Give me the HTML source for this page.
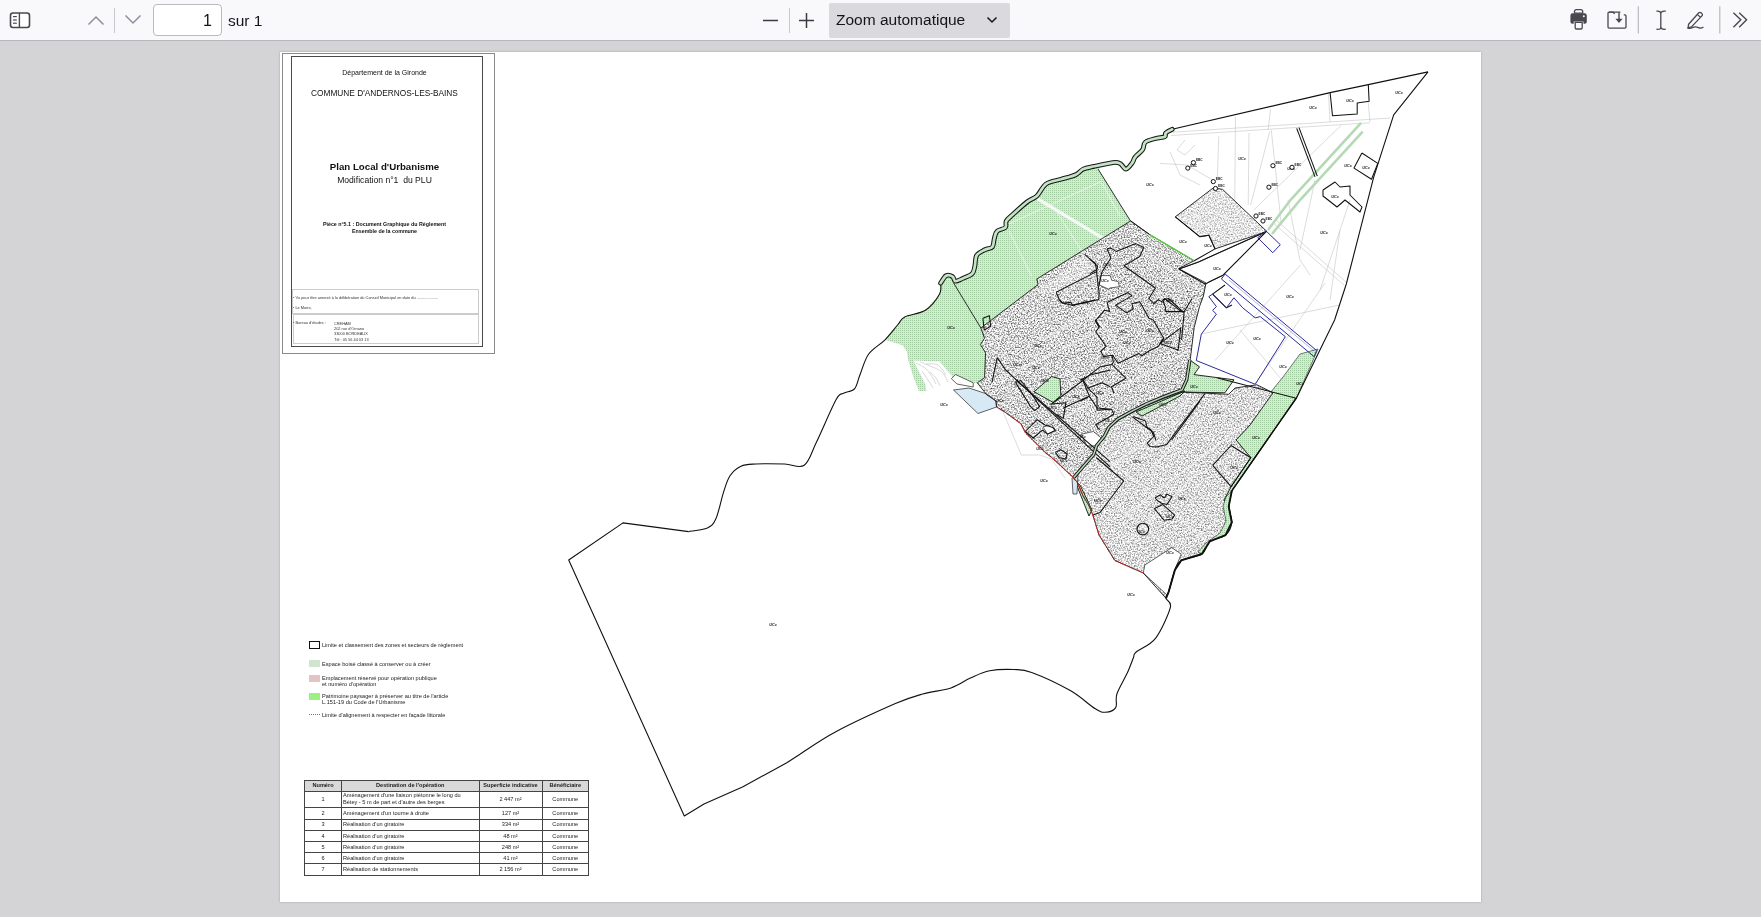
<!DOCTYPE html>
<html><head><meta charset="utf-8">
<style>
html,body{margin:0;padding:0;width:1761px;height:917px;overflow:hidden;background:#d4d4d7;font-family:"Liberation Sans",sans-serif;}
#tb{position:absolute;left:0;top:0;width:1761px;height:40px;background:#f9f9fb;border-bottom:1px solid #b8b8bc;will-change:transform;}
.ic{position:absolute;}
#pagenum{position:absolute;left:153px;top:4px;width:69px;height:32px;box-sizing:border-box;border:1px solid #b9b9c2;border-radius:4px;background:#fff;font-size:16px;color:#15141a;text-align:right;padding-right:9px;line-height:32px;}
#sur{position:absolute;left:228px;top:12px;font-size:15.5px;color:#15141a;}
#zoomsel{position:absolute;left:829px;top:3px;width:181px;height:35px;background:#d9d9de;border-radius:2px;}
#zoomtxt{position:absolute;left:836px;top:11px;font-size:15.5px;color:#15141a;}
.sep{position:absolute;top:8px;width:1px;height:25px;background:#bdbdc2;}
#page{position:absolute;left:280px;top:52px;width:1201px;height:850px;background:#fff;box-shadow:0 0 2px rgba(0,0,0,0.25);will-change:transform;}
svg{position:absolute;left:0;top:0;}
.tt{position:absolute;left:8.5px;width:192px;text-align:center;color:#111;white-space:nowrap;line-height:1;}
.lg{position:absolute;font-size:5.6px;color:#222;white-space:nowrap;line-height:6px;}
#ops td{border:1px solid #444;padding:0 1px;font-size:5.6px;line-height:7.4px;text-align:center;color:#222;box-sizing:border-box;}
.st{position:absolute;font-size:3.9px;color:#333;white-space:nowrap;line-height:1;}
</style></head><body>
<div id="tb">
 <svg class="ic" width="40" height="40" style="left:0;top:0">
  <rect x="10.5" y="13" width="19" height="14.5" rx="2.5" fill="#fff" stroke="#48484f" stroke-width="1.6"/>
  <line x1="19.4" y1="13" x2="19.4" y2="27.5" stroke="#48484f" stroke-width="1.4"/>
  <line x1="13" y1="16.6" x2="16.8" y2="16.6" stroke="#48484f" stroke-width="1.2"/>
  <line x1="13" y1="20" x2="16.8" y2="20" stroke="#48484f" stroke-width="1.2"/>
  <line x1="13" y1="23.2" x2="16.8" y2="23.2" stroke="#48484f" stroke-width="1.2"/>
 </svg>
 <svg class="ic" width="160" height="40" style="left:80px;top:0">
  <polyline points="8.5,24.5 16,17 23.5,24.5" fill="none" stroke="#8f8f9d" stroke-width="1.5"/>
  <line x1="34.5" y1="8" x2="34.5" y2="33" stroke="#c8c8cc" stroke-width="1"/>
  <polyline points="45.5,15.5 53,23 60.5,15.5" fill="none" stroke="#8f8f9d" stroke-width="1.5"/>
 </svg>
 <div id="pagenum">1</div>
 <div id="sur">sur 1</div>
 <svg class="ic" width="60" height="40" style="left:760px;top:0">
  <line x1="3" y1="20.5" x2="18" y2="20.5" stroke="#3a3a44" stroke-width="1.5"/>
  <line x1="29.5" y1="8" x2="29.5" y2="33" stroke="#c8c8cc" stroke-width="1"/>
  <line x1="39" y1="20.5" x2="54" y2="20.5" stroke="#3a3a44" stroke-width="1.5"/>
  <line x1="46.5" y1="13" x2="46.5" y2="28" stroke="#3a3a44" stroke-width="1.5"/>
 </svg>
 <div id="zoomsel"></div>
 <div id="zoomtxt">Zoom automatique</div>
 <svg class="ic" width="20" height="40" style="left:982px;top:0">
  <polyline points="5.5,17.5 10,22 14.5,17.5" fill="none" stroke="#15141a" stroke-width="1.5"/>
 </svg>
 <svg class="ic" width="221" height="40" style="left:1540px;top:0">
  <g fill="#48484f" stroke="none">
   <path d="M34.5,13.2 v-1.6 a2,2 0 0 1 2,-2 h4.2 a2,2 0 0 1 2,2 v1.6 z" fill="none" stroke="#48484f" stroke-width="1.3"/>
   <path d="M32.6,13.3 h12 a2.2,2.2 0 0 1 2.2,2.2 v6.3 a2,2 0 0 1 -2,2 h-1.3 v-2.4 h-9.8 v2.4 h-1.3 a2,2 0 0 1 -2,-2 v-6.3 a2.2,2.2 0 0 1 2.2,-2.2 z"/>
   <circle cx="43.8" cy="16.2" r="1" fill="#f9f9fb"/>
   <path d="M35.2,22.4 h7 v5.4 a1.2,1.2 0 0 1 -1.2,1.2 h-4.6 a1.2,1.2 0 0 1 -1.2,-1.2 z" fill="none" stroke="#48484f" stroke-width="1.3"/>
  </g>
  <path d="M80.4,12.2 h-11.3 a1.1,1.1 0 0 0 -1.1,1.1 v13.8 a1.1,1.1 0 0 0 1.1,1.1 h15.8 a1.1,1.1 0 0 0 1.1,-1.1 v-11.2 a1,1 0 0 0 -1,-1 h-1.2" fill="none" stroke="#48484f" stroke-width="1.3"/>
  <path d="M69.1,12.2 h4 l1.6,1.6" fill="none" stroke="#48484f" stroke-width="1.3"/>
  <line x1="79" y1="12.5" x2="79" y2="20" stroke="#48484f" stroke-width="1.4"/>
  <path d="M75.4,18.7 h7.2 l-3.6,4.2 z" fill="#48484f"/>
  <line x1="98.3" y1="6.2" x2="98.3" y2="33.6" stroke="#b4b4ba" stroke-width="1.1"/>
  <path d="M116.4,11.2 q4,-0.6 4.4,2 v14 q0.3,2.6 -4.4,2 M125.8,11.2 q-4.6,-0.6 -5,2 M125.8,29.2 q-4.6,0.6 -5,-2 M120.8,13.2 v14" fill="none" stroke="#48484f" stroke-width="1.3"/>
  <path d="M148.6,24.2 l10.2,-11.4 a1.6,1.6 0 0 1 2.3,0 l0.8,0.8 a1.6,1.6 0 0 1 0,2.3 l-10.4,11 l-3.4,1 z M157.4,14.4 l3,3" fill="none" stroke="#48484f" stroke-width="1.3" stroke-linejoin="round"/>
  <path d="M147.4,27.6 q2.2,1.5 5,0 q3,-1.4 6,0 q2.6,1.2 5,-0.6" fill="none" stroke="#48484f" stroke-width="1.3"/>
  <line x1="179.8" y1="6.2" x2="179.8" y2="33.6" stroke="#b4b4ba" stroke-width="1.1"/>
  <path d="M193.4,12.8 l7.4,7 l-7.4,7.4 M199.2,12.8 l7.4,7 l-7.4,7.4" fill="none" stroke="#48484f" stroke-width="1.4"/>
 </svg>
</div>
<div id="page">
 <div style="position:absolute;left:2px;top:1px;width:213px;height:300.5px;box-sizing:border-box;border:1px solid #8a8a8a;"></div>
 <div style="position:absolute;left:11px;top:4px;width:192px;height:291px;box-sizing:border-box;border:1px solid #4a4a4a;"></div>
 <div class="tt" style="top:17px;font-size:7px;">Département de la Gironde</div>
 <div class="tt" style="top:36.5px;font-size:8.3px;">COMMUNE D'ANDERNOS-LES-BAINS</div>
 <div class="tt" style="top:109.5px;font-size:9.7px;font-weight:bold;">Plan Local d'Urbanisme</div>
 <div class="tt" style="top:123.5px;font-size:8.6px;">Modification n°1&nbsp; du PLU</div>
 <div class="tt" style="top:170px;font-size:5.3px;font-weight:bold;">Pièce n°5.1 : Document Graphique du Règlement</div>
 <div class="tt" style="top:176.8px;font-size:5.3px;font-weight:bold;">Ensemble de la commune</div>
 <div style="position:absolute;left:12px;top:237px;width:187px;height:25px;box-sizing:border-box;border:1px solid #ccc;"></div>
 <div style="position:absolute;left:13px;top:262px;width:186px;height:30px;box-sizing:border-box;border:1px solid #ccc;"></div>
 <div class="st" style="left:13px;top:244px;">• Vu pour être annexé à la délibération du Conseil Municipal en date du ....................</div>
 <div class="st" style="left:13px;top:254px;">• Le Maire,</div>
 <div class="st" style="left:13px;top:269px;">• Bureau d'études :</div>
 <div class="st" style="left:54px;top:269px;line-height:5.2px;">CREHAM<br>202 rue d'Ornano<br>33000 BORDEAUX<br>Tél : 05 56 44 03 13</div>

 <div style="position:absolute;left:29px;top:589px;width:11px;height:8px;box-sizing:border-box;border:1.3px solid #111;"></div>
 <div class="lg" style="left:42px;top:590px;">Limite et classement des zones et secteurs de règlement</div>
 <div style="position:absolute;left:29px;top:608px;width:11px;height:7px;background:#cfe5cf;"></div>
 <div class="lg" style="left:42px;top:609px;">Espace boisé classé à conserver ou à créer</div>
 <div style="position:absolute;left:29px;top:623px;width:11px;height:7px;background:#e2c4c4;"></div>
 <div class="lg" style="left:42px;top:623px;">Emplacement réservé pour opération publique<br>et numéro d'opération</div>
 <div style="position:absolute;left:29px;top:641px;width:11px;height:7px;background:#9cf27e;"></div>
 <div class="lg" style="left:42px;top:641px;">Patrimoine paysager à préserver au titre de l'article<br>L.151-19 du Code de l'Urbanisme</div>
 <div style="position:absolute;left:29px;top:662px;width:11px;height:0;border-top:1px dotted #e04848;"></div>
 <div class="lg" style="left:42px;top:660px;">Limite d'alignement à respecter en façade littorale</div>
<table id="ops" style="position:absolute;left:24px;top:728px;border-collapse:collapse;"><tr style="height:10.6px;background:#d9d9d9;font-weight:bold;"><td style="width:37px">Numéro</td><td style="width:137.5px">Destination de l&#39;opération</td><td style="width:63px">Superficie indicative</td><td style="width:46.5px">Bénéficiaire</td></tr><tr style="height:16.5px"><td>1</td><td style="text-align:left">Aménagement d'une liaison piétonne le long du<br>Bétey - 5 m de part et d'autre des berges</td><td>2 447 m²</td><td>Commune</td></tr><tr style="height:11.6px"><td>2</td><td style="text-align:left">Aménagement d'un tourne à droite</td><td>127 m²</td><td>Commune</td></tr><tr style="height:11.4px"><td>3</td><td style="text-align:left">Réalisation d'un giratoire</td><td>334 m²</td><td>Commune</td></tr><tr style="height:11.3px"><td>4</td><td style="text-align:left">Réalisation d'un giratoire</td><td>48 m²</td><td>Commune</td></tr><tr style="height:11px"><td>5</td><td style="text-align:left">Réalisation d'un giratoire</td><td>248 m²</td><td>Commune</td></tr><tr style="height:11px"><td>6</td><td style="text-align:left">Réalisation d'un giratoire</td><td>41 m²</td><td>Commune</td></tr><tr style="height:11.9px"><td>7</td><td style="text-align:left">Réalisation de stationnements</td><td>2 156 m²</td><td>Commune</td></tr></table>
</div>
<!--MAP--><svg width="1761" height="917" viewBox="0 0 1761 917" style="position:absolute;left:0;top:0">
<defs>
<filter id="speck" x="0" y="0" width="100%" height="100%" color-interpolation-filters="sRGB">
 <feTurbulence type="fractalNoise" baseFrequency="0.7" numOctaves="2" seed="7" result="n"/>
 <feColorMatrix in="n" type="matrix" values="1.6 0 0 0 0.03  1.6 0 0 0 0.03  1.6 0 0 0 0.03  0 0 0 0 1" />
 <feGaussianBlur stdDeviation="0.3"/>
</filter>
<pattern id="gdots" width="2" height="2" patternUnits="userSpaceOnUse"><rect width="2" height="2" fill="#d4ead4"/><rect width="1" height="1" fill="#a3cca3"/></pattern>
<clipPath id="urb"><polygon points="980.9,328.0 1038.1,284.5 1036.8,279.0 1130.5,221.0 1149.7,234.6 1194.2,260.8 1178.5,268.6 1206.0,283.0 1203.4,296.0 1199.5,306.6 1194.2,327.5 1190.3,358.9 1186.7,379.8 1182.1,389.8 1163.8,396.6 1145.5,404.3 1133.3,410.4 1118.0,418.8 1108.9,427.2 1104.3,436.3 1096.6,445.5 1093.6,454.7 1082.9,466.9 1073.7,477.6 1068.5,473.0 1051.6,457.4 1045.5,452.8 1031.8,439.1 1025.6,433.0 1021.0,423.8 1004.3,411.6 996.6,407.0 995.9,400.9 986.7,394.8 977.3,382.8 984.5,377.7 985.6,352.8 980.4,344.5 984.5,338.3"/><polygon points="1073.7,479.0 1082.9,468.0 1093.6,456.0 1096.6,447.0 1104.3,438.0 1108.9,429.0 1118.0,420.5 1133.3,412.0 1145.5,406.0 1163.8,398.5 1182.1,392.0 1228.7,394.3 1235.0,388.0 1257.0,384.8 1273.0,392.8 1250.0,425.0 1236.0,440.0 1250.8,457.7 1231.0,486.7 1224.0,500.0 1229.0,506.0 1231.8,522.4 1225.5,535.1 1209.7,541.4 1201.8,554.0 1181.2,560.4 1174.9,569.9 1168.6,592.0 1166.0,598.3 1143.3,573.0 1114.8,560.4 1099.0,535.0 1093.3,516.5 1089.2,506.1 1083.0,495.8 1076.8,481.3"/><polygon points="1175.3,216.8 1213.4,187.8 1222.6,189.4 1266.9,231.5 1215.0,248.9 1208.9,235.2 1199.7,236.7"/></clipPath>
</defs>
<polygon points="1428.0,71.9 1393.7,114.9 1373.7,177.1 1346.3,284.0 1334.6,320.0 1296.7,397.5 1231.8,490.8 1228.7,506.6 1231.8,522.4 1225.5,535.1 1209.7,541.4 1201.8,554.0 1181.2,560.4 1174.9,569.9 1168.6,592.0 1166.0,598.3 1170.3,607.7 1155.5,638.4 1136.2,652.0 1133.4,657.7 1127.0,673.6 1116.9,694.0 1115.7,707.6 1105.5,712.2 1095.3,708.8 1070.3,690.6 1031.7,672.4 1013.5,669.5 989.7,670.8 970.4,678.1 951.0,687.9 922.7,694.0 895.4,703.6 836.3,731.5 800.0,754.2 786.8,762.7 743.0,786.7 704.0,804.0 684.3,816.0 568.7,560.0 623.0,522.9 688.6,531.6 707.4,528.0 716.0,518.5 723.5,492.3 730.0,475.8 741.0,466.2 756.0,464.0 784.6,464.0 804.2,465.3 816.4,442.3 836.0,399.8 843.6,393.2 854.5,388.9 860.0,374.7 868.7,354.0 885.0,339.8 898.0,324.5 904.7,316.9 925.4,310.3 939.6,294.0 940.6,283.1 946.1,275.7 952.6,276.6 955.4,281.2 962.8,278.4 972.1,273.8 974.8,266.4 976.7,255.3 985.0,249.7 992.4,246.9 994.3,238.6 997.1,231.2 1005.4,227.5 1006.3,221.0 1012.8,214.5 1027.7,201.5 1036.9,196.0 1046.2,183.9 1061.0,179.3 1075.8,174.7 1083.3,169.1 1094.4,166.3 1112.9,162.6 1120.3,163.6 1125.9,169.1 1132.4,162.6 1135.1,157.1 1142.6,149.7 1145.3,142.2 1155.5,138.5 1164.8,136.7 1165.7,133.0 1172.2,129.3 1330.1,92.6 1368.3,84.6 1428.0,71.9" fill="#fff" stroke="none"/>
<polyline points="1171.0,132.3 1390.6,118.0" fill="none" stroke="#c4c4c4" stroke-width="0.6"/>
<polyline points="1171.0,135.5 1370.0,122.8" fill="none" stroke="#c4c4c4" stroke-width="0.6"/>
<polyline points="1235.5,117.2 1234.7,205.0" fill="none" stroke="#c4c4c4" stroke-width="0.6"/>
<polyline points="1249.0,133.0 1248.2,205.0" fill="none" stroke="#c4c4c4" stroke-width="0.6"/>
<polyline points="1270.5,109.3 1268.1,130.0" fill="none" stroke="#c4c4c4" stroke-width="0.6"/>
<polyline points="1269.7,131.5 1250.6,205.0" fill="none" stroke="#c4c4c4" stroke-width="0.6"/>
<polyline points="1271.3,130.0 1281.0,222.0" fill="none" stroke="#c4c4c4" stroke-width="0.6"/>
<polyline points="1218.8,136.3 1217.2,180.8" fill="none" stroke="#c4c4c4" stroke-width="0.6"/>
<polyline points="1328.5,94.2 1330.1,122.0" fill="none" stroke="#c4c4c4" stroke-width="0.6"/>
<polyline points="1368.0,101.0 1370.0,122.0" fill="none" stroke="#c4c4c4" stroke-width="0.6"/>
<polyline points="1341.3,125.2 1253.8,210.0" fill="none" stroke="#c4c4c4" stroke-width="0.6"/>
<polyline points="1160.0,163.4 1187.0,165.0 1214.0,180.8" fill="none" stroke="#c4c4c4" stroke-width="0.6"/>
<polyline points="1272.8,222.6 1344.2,285.3" fill="none" stroke="#c4c4c4" stroke-width="0.6"/>
<polyline points="1275.0,219.0 1346.0,282.0" fill="none" stroke="#c4c4c4" stroke-width="0.6"/>
<polyline points="1300.3,265.2 1215.0,360.5" fill="none" stroke="#c4c4c4" stroke-width="0.6"/>
<polyline points="1325.0,283.0 1255.0,384.0" fill="none" stroke="#c4c4c4" stroke-width="0.6"/>
<polyline points="1201.0,334.0 1340.0,305.0" fill="none" stroke="#c4c4c4" stroke-width="0.6"/>
<polyline points="1240.0,330.0 1297.0,398.0" fill="none" stroke="#c4c4c4" stroke-width="0.6"/>
<polyline points="1315.0,180.0 1300.0,250.0" fill="none" stroke="#c4c4c4" stroke-width="0.6"/>
<polyline points="1170.0,152.0 1180.0,175.0 1200.0,185.0" fill="none" stroke="#c4c4c4" stroke-width="0.6"/>
<polyline points="1288.0,200.0 1300.0,260.0 1310.0,275.0" fill="none" stroke="#c4c4c4" stroke-width="0.6"/>
<polyline points="1185.0,140.0 1177.0,150.0 1185.0,155.0 1195.0,145.0" fill="none" stroke="#c4c4c4" stroke-width="0.6"/>
<polyline points="1003.0,412.0 1021.4,455.0 1039.7,455.0 1051.5,459.0 1065.0,478.0" fill="none" stroke="#c4c4c4" stroke-width="0.6"/>
<polyline points="1350.0,200.0 1320.0,290.0" fill="none" stroke="#c4c4c4" stroke-width="0.6"/>
<polyline points="1340.0,230.0 1330.0,300.0" fill="none" stroke="#c4c4c4" stroke-width="0.6"/>
<polygon points="885.0,339.8 898.0,324.5 904.7,316.9 925.4,310.3 939.6,294.0 940.6,283.1 946.1,275.7 952.6,276.6 955.4,281.2 962.8,278.4 972.1,273.8 974.8,266.4 976.7,255.3 985.0,249.7 992.4,246.9 994.3,238.6 997.1,231.2 1005.4,227.5 1006.3,221.0 1012.8,214.5 1027.7,201.5 1036.9,196.0 1046.2,183.9 1061.0,179.3 1075.8,174.7 1083.3,169.1 1094.4,166.3 1112.9,162.6 1098.1,169.1 1130.5,221.0 1036.8,279.0 1038.1,284.5 980.9,328.0 984.5,338.3 980.4,344.5 985.6,352.8 984.5,377.7 977.3,382.8 974.5,383.4 952.7,376.9 939.6,361.6 913.4,360.5 925.4,384.5 926.5,391.0 918.9,391.0 913.4,376.9 908.0,359.4 906.9,351.8 902.5,345.2" fill="url(#gdots)"/>
<polygon points="1283.0,377.0 1300.0,354.0 1318.0,349.0 1296.7,397.5 1231.8,490.8 1228.7,506.6 1224.0,500.0 1231.0,486.7 1250.8,457.7 1236.0,440.0 1250.0,425.0 1270.0,393.0" fill="url(#gdots)" stroke="#222" stroke-width="0.6"/>
<polyline points="1361.1,122.8 1290.4,200 1268,230" fill="none" stroke="#b5d9b5" stroke-width="2.6"/>
<polyline points="1362.7,131.6 1300,200 1272,234" fill="none" stroke="#b5d9b5" stroke-width="2.6"/>
<polygon points="980.9,328.0 1038.1,284.5 1036.8,279.0 1130.5,221.0 1149.7,234.6 1194.2,260.8 1178.5,268.6 1206.0,283.0 1203.4,296.0 1199.5,306.6 1194.2,327.5 1190.3,358.9 1186.7,379.8 1182.1,389.8 1163.8,396.6 1145.5,404.3 1133.3,410.4 1118.0,418.8 1108.9,427.2 1104.3,436.3 1096.6,445.5 1093.6,454.7 1082.9,466.9 1073.7,477.6 1068.5,473.0 1051.6,457.4 1045.5,452.8 1031.8,439.1 1025.6,433.0 1021.0,423.8 1004.3,411.6 996.6,407.0 995.9,400.9 986.7,394.8 977.3,382.8 984.5,377.7 985.6,352.8 980.4,344.5 984.5,338.3" fill="#e4e4e4"/>
<polygon points="1073.7,479.0 1082.9,468.0 1093.6,456.0 1096.6,447.0 1104.3,438.0 1108.9,429.0 1118.0,420.5 1133.3,412.0 1145.5,406.0 1163.8,398.5 1182.1,392.0 1228.7,394.3 1235.0,388.0 1257.0,384.8 1273.0,392.8 1250.0,425.0 1236.0,440.0 1250.8,457.7 1231.0,486.7 1224.0,500.0 1229.0,506.0 1231.8,522.4 1225.5,535.1 1209.7,541.4 1201.8,554.0 1181.2,560.4 1174.9,569.9 1168.6,592.0 1166.0,598.3 1143.3,573.0 1114.8,560.4 1099.0,535.0 1093.3,516.5 1089.2,506.1 1083.0,495.8 1076.8,481.3" fill="#e4e4e4"/>
<polygon points="1175.3,216.8 1213.4,187.8 1222.6,189.4 1266.9,231.5 1215.0,248.9 1208.9,235.2 1199.7,236.7" fill="#e4e4e4"/>
<g clip-path="url(#urb)"><rect x="960" y="180" width="320" height="430" filter="url(#speck)"/>
<polyline points="1100.0,452.0 1230.0,560.0" fill="none" stroke="#f4f4f4" stroke-width="2" opacity="0.55"/>
<polyline points="1090.0,480.0 1180.0,420.0" fill="none" stroke="#f4f4f4" stroke-width="2" opacity="0.55"/>
<polyline points="1120.0,520.0 1250.0,420.0" fill="none" stroke="#f4f4f4" stroke-width="2" opacity="0.55"/>
<polyline points="1040.0,340.0 1120.0,300.0" fill="none" stroke="#f4f4f4" stroke-width="2" opacity="0.55"/>
<polyline points="1000.0,380.0 1100.0,330.0" fill="none" stroke="#f4f4f4" stroke-width="2" opacity="0.55"/>
<polyline points="1060.0,420.0 1190.0,350.0" fill="none" stroke="#f4f4f4" stroke-width="2" opacity="0.55"/>
<polyline points="1140.0,250.0 1200.0,290.0" fill="none" stroke="#f4f4f4" stroke-width="2" opacity="0.55"/>
<polyline points="1080.0,300.0 1150.0,380.0" fill="none" stroke="#f4f4f4" stroke-width="2" opacity="0.55"/>
<polyline points="1150.0,470.0 1200.0,420.0" fill="none" stroke="#f4f4f4" stroke-width="2" opacity="0.55"/>
<polyline points="1130.0,540.0 1200.0,470.0" fill="none" stroke="#f4f4f4" stroke-width="2" opacity="0.55"/>
<polyline points="1110.0,500.0 1160.0,540.0" fill="none" stroke="#f4f4f4" stroke-width="2" opacity="0.55"/>
</g>
<polygon points="1175.3,216.8 1213.4,187.8 1222.6,189.4 1266.9,231.5 1215.0,248.9 1208.9,235.2 1199.7,236.7" fill="#fff" opacity="0.4"/>
<polygon points="1073.7,479.0 1082.9,468.0 1093.6,456.0 1096.6,447.0 1104.3,438.0 1108.9,429.0 1118.0,420.5 1133.3,412.0 1145.5,406.0 1163.8,398.5 1182.1,392.0 1228.7,394.3 1235.0,388.0 1257.0,384.8 1273.0,392.8 1250.0,425.0 1236.0,440.0 1250.8,457.7 1231.0,486.7 1224.0,500.0 1229.0,506.0 1231.8,522.4 1225.5,535.1 1209.7,541.4 1201.8,554.0 1181.2,560.4 1174.9,569.9 1168.6,592.0 1166.0,598.3 1143.3,573.0 1114.8,560.4 1099.0,535.0 1093.3,516.5 1089.2,506.1 1083.0,495.8 1076.8,481.3" fill="#fff" opacity="0.2"/>
<polygon points="1036.5,290.2 1084.5,254.2 1097.6,266.2 1096.5,271.6 1056.2,292.3 1040,294" fill="#fff" opacity="0.3"/>
<circle cx="1142.8" cy="529.1" r="5.8" fill="none" stroke="#111" stroke-width="1.1"/>
<polygon points="1182.1,390.5 1186.7,379.8 1189.8,360.0 1199.5,366.8 1194.0,374.6 1234.0,379.8 1224.9,392.8 1185.2,392.1" fill="url(#gdots)" stroke="#111" stroke-width="0.9"/>
<polygon points="1136.0,412.0 1185.0,391.0 1180.0,396.0 1142.0,416.0" fill="url(#gdots)" stroke="#111" stroke-width="0.9"/>
<polygon points="1034.0,391.8 1051.6,376.5 1060.0,378.8 1060.8,395.6 1053.1,402.4" fill="url(#gdots)" stroke="#111" stroke-width="0.9"/>
<polygon points="1075.0,481.0 1080.0,485.0 1092.0,510.0 1089.0,516.0" fill="url(#gdots)" stroke="#111" stroke-width="0.9"/>
<polygon points="1144.8,565.0 1171.7,547.7 1181.2,554.0 1174.9,569.9 1168.6,592.0 1167.0,595.0 1143.3,573.0" fill="#fff" stroke="#222" stroke-width="0.7"/>
<polygon points="951.4,378.7 955.5,374.5 973.2,382.8 973.2,387.0 957.0,384.0" fill="#fff" stroke="#222" stroke-width="0.7"/>
<polygon points="1100.5,275.6 1110.3,275.6 1111.6,280.2 1118.1,281.5 1119.4,286.7 1109.6,288.0 1109.0,289.4 1099.2,284.8" fill="#fff" stroke="#222" stroke-width="0.7"/>
<polygon points="1179.0,269.1 1198.6,261.9 1266.5,231.4 1223.0,275.2 1210.0,281.5 1205.2,284.1" fill="#fff" stroke="#222" stroke-width="0.7"/>
<polygon points="1043.0,427.0 1052.0,424.5 1055.0,431.0 1047.6,434.1" fill="#fff" stroke="#222" stroke-width="0.7"/>
<polygon points="1081.6,434.1 1093.4,431.5 1101.2,438.0 1094.7,445.9 1086.8,445.9" fill="#fff" stroke="#222" stroke-width="0.7"/>
<polygon points="953.5,390.0 969.0,388.0 987.0,394.0 996.0,401.0 996.5,407.0 978.0,413.5" fill="#d6e9f4" stroke="#222" stroke-width="0.7"/>
<polygon points="1072.0,478.0 1078.0,474.0 1077.0,494.0 1073.0,494.0" fill="#d6e9f4" stroke="#222" stroke-width="0.7"/>
<path d="M916.0,363.0 C917.5,363.8 922.5,366.0 925.0,368.0 C927.5,370.0 929.2,372.3 931.0,375.0 C932.8,377.7 935.2,382.5 936.0,384.0" fill="none" stroke="#bdbdbd" stroke-width="0.6"/>
<path d="M920.0,362.0 C921.7,362.7 926.3,364.3 930.0,366.0 C933.7,367.7 939.0,369.3 942.0,372.0 C945.0,374.7 947.0,380.3 948.0,382.0" fill="none" stroke="#bdbdbd" stroke-width="0.6"/>
<path d="M926.0,364.0 C928.0,364.2 934.7,363.2 938.0,365.0 C941.3,366.8 944.7,373.3 946.0,375.0" fill="none" stroke="#bdbdbd" stroke-width="0.6"/>
<path d="M930.0,372.0 C931.0,373.0 934.3,375.7 936.0,378.0 C937.7,380.3 939.3,384.7 940.0,386.0" fill="none" stroke="#bdbdbd" stroke-width="0.6"/>
<path d="M922.0,371.0 C923.0,372.5 926.2,377.2 928.0,380.0 C929.8,382.8 932.2,386.7 933.0,388.0" fill="none" stroke="#bdbdbd" stroke-width="0.6"/>
<polyline points="1036.0,197.8 1103.6,238.6" fill="none" stroke="#f6faf6" stroke-width="3.2"/>
<polyline points="1009.1,223.8 1101.8,181.2" fill="none" stroke="#f0f8f0" stroke-width="0.8"/>
<polyline points="1009.1,231.2 1031.4,275.7" fill="none" stroke="#f0f8f0" stroke-width="0.8"/>
<polyline points="1053.6,207.1 1083.3,253.4" fill="none" stroke="#f0f8f0" stroke-width="0.8"/>
<polyline points="1101.8,183.0 1120.3,216.4" fill="none" stroke="#f0f8f0" stroke-width="0.8"/>
<polygon points="980.9,328.0 1038.1,284.5 1036.8,279.0 1130.5,221.0 1149.7,234.6 1194.2,260.8 1178.5,268.6 1206.0,283.0 1203.4,296.0 1199.5,306.6 1194.2,327.5 1190.3,358.9 1186.7,379.8 1182.1,389.8 1163.8,396.6 1145.5,404.3 1133.3,410.4 1118.0,418.8 1108.9,427.2 1104.3,436.3 1096.6,445.5 1093.6,454.7 1082.9,466.9 1073.7,477.6 1068.5,473.0 1051.6,457.4 1045.5,452.8 1031.8,439.1 1025.6,433.0 1021.0,423.8 1004.3,411.6 996.6,407.0 995.9,400.9 986.7,394.8 977.3,382.8 984.5,377.7 985.6,352.8 980.4,344.5 984.5,338.3" fill="none" stroke="#1a1a1a" stroke-width="0.9"/>
<polygon points="1073.7,479.0 1082.9,468.0 1093.6,456.0 1096.6,447.0 1104.3,438.0 1108.9,429.0 1118.0,420.5 1133.3,412.0 1145.5,406.0 1163.8,398.5 1182.1,392.0 1228.7,394.3 1235.0,388.0 1257.0,384.8 1273.0,392.8 1250.0,425.0 1236.0,440.0 1250.8,457.7 1231.0,486.7 1224.0,500.0 1229.0,506.0 1231.8,522.4 1225.5,535.1 1209.7,541.4 1201.8,554.0 1181.2,560.4 1174.9,569.9 1168.6,592.0 1166.0,598.3 1143.3,573.0 1114.8,560.4 1099.0,535.0 1093.3,516.5 1089.2,506.1 1083.0,495.8 1076.8,481.3" fill="none" stroke="#1a1a1a" stroke-width="0.9"/>
<polygon points="1175.3,216.8 1213.4,187.8 1222.6,189.4 1266.9,231.5 1215.0,248.9 1208.9,235.2 1199.7,236.7" fill="none" stroke="#1a1a1a" stroke-width="0.9"/>
<polyline points="980.9,328 953.6,283" fill="none" stroke="#1a1a1a" stroke-width="0.9"/>
<polyline points="1098.1,169.1 1130.5,221" fill="none" stroke="#1a1a1a" stroke-width="0.9"/>
<polyline points="1131,221 1149.7,234.6" fill="none" stroke="#1a1a1a" stroke-width="0.9"/>
<polyline points="1149.7,234.6 1194.2,260.8" fill="none" stroke="#5ad040" stroke-width="1.3"/>
<polyline points="1056.2,292.3 1096.5,271.6 1099.2,293.4 1098.7,299.4 1072.5,305.4 1070.9,302.2 1062.7,303.2 1059.4,300.0 1056.2,292.3" fill="none" stroke="#111" stroke-width="1.05" stroke-linejoin="round"/>
<polyline points="1084.5,254.2 1097.6,266.2 1096.5,271.6" fill="none" stroke="#111" stroke-width="1.05" stroke-linejoin="round"/>
<polyline points="1107.0,248.8 1110.9,248.1 1116.2,251.4 1135.8,243.6 1143.7,247.5 1139.7,256.6 1124.0,265.8 1155.4,288.0 1148.9,298.5 1154.1,303.7 1158.0,299.8 1163.3,302.4 1164.6,298.5 1181.6,311.6 1184.2,311.6" fill="none" stroke="#111" stroke-width="1.05" stroke-linejoin="round"/>
<polyline points="1107.0,248.8 1110.9,258.0 1101.8,272.3 1099.2,284.8" fill="none" stroke="#111" stroke-width="1.05" stroke-linejoin="round"/>
<polyline points="1162.6,299.8 1168.5,298.5 1182.9,311.6 1165.9,311.6 1165.2,306.4 1162.6,299.8" fill="none" stroke="#111" stroke-width="1.05" stroke-linejoin="round"/>
<polyline points="1107.0,302.4 1127.9,292.6 1131.9,295.9 1115.5,305.1 1126.6,312.9 1133.2,309.0 1131.9,303.7 1139.7,301.8 1148.9,318.1 1151.5,319.4 1153.3,320.0 1163.7,338.3 1158.5,346.2 1149.4,350.8 1141.5,356.0 1138.9,353.4 1118.0,363.2 1112.7,355.3 1103.6,356.6 1100.9,351.4 1106.2,346.2 1095.7,331.8 1099.6,326.5 1095.7,320.0" fill="none" stroke="#111" stroke-width="1.05" stroke-linejoin="round"/>
<polyline points="1107.0,302.4 1109.6,311.6 1104.4,310.3 1095.2,320.8 1099.2,327.3" fill="none" stroke="#111" stroke-width="1.05" stroke-linejoin="round"/>
<polyline points="1090.0,259.3 1095.2,263.2 1096.5,269.7 1090.0,273.6" fill="none" stroke="#111" stroke-width="1.05" stroke-linejoin="round"/>
<polyline points="1159.8,343.6 1180.8,327.9 1178.1,350.1 1159.8,343.6" fill="none" stroke="#111" stroke-width="1.05" stroke-linejoin="round"/>
<polyline points="1163.7,338.3 1159.8,343.6" fill="none" stroke="#111" stroke-width="1.05" stroke-linejoin="round"/>
<polyline points="1080.0,380.2 1087.9,376.3 1099.6,367.1 1112.0,364.5 1113.4,361.9 1112.0,355.3" fill="none" stroke="#111" stroke-width="1.05" stroke-linejoin="round"/>
<polyline points="1112.0,364.5 1125.8,378.2 1111.4,386.7 1114.0,393.3" fill="none" stroke="#111" stroke-width="1.05" stroke-linejoin="round"/>
<polyline points="1082.6,378.9 1087.9,388.0 1102.2,382.8 1110.0,386.7" fill="none" stroke="#111" stroke-width="1.05" stroke-linejoin="round"/>
<polyline points="1087.9,388.0 1097.0,397.2 1097.0,410.3 1111.4,409.0 1114.0,414.2 1095.7,424.7 1099.6,430.0" fill="none" stroke="#111" stroke-width="1.05" stroke-linejoin="round"/>
<polyline points="1080.0,401.1 1087.9,397.2" fill="none" stroke="#111" stroke-width="1.05" stroke-linejoin="round"/>
<polyline points="1132.3,416.8 1153.3,432.5 1155.9,440.0" fill="none" stroke="#111" stroke-width="1.05" stroke-linejoin="round"/>
<polyline points="1171.6,440.0 1200.0,401.1" fill="none" stroke="#111" stroke-width="1.05" stroke-linejoin="round"/>
<polyline points="997.2,357.6 1005.7,370.0" fill="none" stroke="#111" stroke-width="1.05" stroke-linejoin="round"/>
<polyline points="997.2,357.6 992.0,382.4" fill="none" stroke="#111" stroke-width="1.05" stroke-linejoin="round"/>
<polyline points="1060.0,300.0 1061.4,302.6 1071.8,305.2 1095.0,300.0" fill="none" stroke="#111" stroke-width="1.05" stroke-linejoin="round"/>
<polyline points="982.9,318.3 989.4,315.7 990.7,326.2 984.2,330.1 982.9,318.3" fill="none" stroke="#111" stroke-width="1.05" stroke-linejoin="round"/>
<polyline points="1015.5,382.4 1020.8,380.5 1033.2,396.2 1039.7,406.6 1034.5,410.6 1030.6,406.6 1020.1,389.6 1015.5,382.4" fill="none" stroke="#111" stroke-width="1.05" stroke-linejoin="round"/>
<polyline points="1051.5,404.0 1065.9,402.7 1063.3,418.4 1056.7,414.5" fill="none" stroke="#111" stroke-width="1.05" stroke-linejoin="round"/>
<polyline points="1051.5,404.0 1082.9,380.5 1089.4,375.2 1110.0,370.0" fill="none" stroke="#111" stroke-width="1.05" stroke-linejoin="round"/>
<polyline points="1082.9,380.5 1089.4,396.2 1097.2,408.0 1110.0,409.3" fill="none" stroke="#111" stroke-width="1.05" stroke-linejoin="round"/>
<polyline points="1063.3,408.0 1089.4,396.2" fill="none" stroke="#111" stroke-width="1.05" stroke-linejoin="round"/>
<polyline points="1025.3,431.5 1037.1,419.7 1045.0,425.0 1052.8,427.6 1055.4,430.2 1047.6,434.1 1042.3,430.2 1033.2,438.0 1025.3,431.5" fill="none" stroke="#111" stroke-width="1.05" stroke-linejoin="round"/>
<polyline points="1055.4,452.4 1060.7,449.8 1067.2,453.7 1065.9,459.0 1059.4,457.7 1055.4,452.4" fill="none" stroke="#111" stroke-width="1.05" stroke-linejoin="round"/>
<polyline points="1005.7,370.0 1110.0,466.8" fill="none" stroke="#111" stroke-width="1.05" stroke-linejoin="round"/>
<polyline points="1016.0,380.0 1110.0,461.6" fill="none" stroke="#111" stroke-width="1.05" stroke-linejoin="round"/>
<polyline points="1096.2,457.5 1123.7,481.0 1100.1,512.4 1092.9,515.1" fill="none" stroke="#111" stroke-width="1.05" stroke-linejoin="round"/>
<polyline points="1155.0,498.0 1160.3,494.8 1164.2,498.0 1166.8,494.1 1172.1,496.7 1166.8,504.6 1161.6,503.3 1157.7,500.7 1155.0,498.0" fill="none" stroke="#111" stroke-width="1.05" stroke-linejoin="round"/>
<polyline points="1154.4,508.5 1162.9,504.6 1174.7,515.1 1172.1,519.0 1164.2,520.3 1154.4,508.5" fill="none" stroke="#111" stroke-width="1.05" stroke-linejoin="round"/>
<polyline points="1133.3,416.5 1145.5,421.0 1147.0,427.2 1151.1,430.0 1153.7,436.5 1147.2,443.1 1149.8,446.4 1156.4,447.0 1166.8,444.4 1177.3,430.0 1205.0,393.6" fill="none" stroke="#111" stroke-width="1.05" stroke-linejoin="round"/>
<polyline points="1212.7,465.3 1231.0,445.5 1250.8,457.7 1231.0,486.7 1212.7,465.3" fill="none" stroke="#111" stroke-width="1.05" stroke-linejoin="round"/>
<polyline points="1175.3,216.8 1199.7,236.7 1208.9,235.2 1215.0,248.9 1194.2,260.8" fill="none" stroke="#111" stroke-width="1.05" stroke-linejoin="round"/>
<polyline points="1179.0,269.1 1198.6,261.9 1266.5,231.4 1223.0,275.2 1210.0,281.5 1205.2,284.1 1179.0,269.1" fill="none" stroke="#111" stroke-width="1.05" stroke-linejoin="round"/>
<polyline points="1217.6,378.0 1295.3,398.0" fill="none" stroke="#111" stroke-width="1.05" stroke-linejoin="round"/>
<polyline points="1296.7,128.4 1315.0,176.9" fill="none" stroke="#111" stroke-width="1.05" stroke-linejoin="round"/>
<polyline points="1299.0,127.6 1317.3,176.1" fill="none" stroke="#111" stroke-width="1.05" stroke-linejoin="round"/>
<polyline points="1330.1,92.6 1332.5,115.7 1357.2,114.1 1357.2,102.9 1369.1,101.3 1368.3,84.6" fill="none" stroke="#111" stroke-width="1.05" stroke-linejoin="round"/>
<polyline points="1361.9,153.0 1377.8,163.4 1371.5,179.3 1354.0,168.1 1361.9,153.0" fill="none" stroke="#111" stroke-width="1.05" stroke-linejoin="round"/>
<polyline points="1323.0,190.0 1335.0,182.0 1340.0,187.0 1350.0,186.0 1350.0,195.0 1362.0,207.0 1360.0,212.0 1345.0,200.0 1337.0,207.0 1323.0,196.0 1323.0,190.0" fill="none" stroke="#111" stroke-width="1.05" stroke-linejoin="round"/>
<polyline points="1232.0,305.0 1226.4,307.8 1212.6,294.1 1225.0,285.0" fill="none" stroke="#111" stroke-width="1.05" stroke-linejoin="round"/>
<polyline points="1192.1,298.5 1184.2,311.6 1181.6,340.0" fill="none" stroke="#111" stroke-width="1.05" stroke-linejoin="round"/>
<polyline points="1257.7,237.7 1266.5,231.4 1280.3,244.7 1272.8,252.7 1257.7,237.7" fill="none" stroke="#2b2b9c" stroke-width="1"/>
<polyline points="1225.1,274.0 1316.6,350.5 1314.1,356.7 1221.4,279.0 1225.1,274.0" fill="none" stroke="#2b2b9c" stroke-width="1"/>
<polyline points="1208.8,296.6 1216.4,306.6 1212.6,310.4 1216.4,314.1 1201.3,334.2 1196.3,360.5 1255.2,384.3 1285.3,336.7 1260.2,316.6 1255.2,317.9 1242.7,307.8 1233.9,297.8 1226.4,307.8 1212.6,294.1 1208.8,296.6" fill="none" stroke="#2b2b9c" stroke-width="1"/>
<polyline points="1229,280 1314,351" fill="none" stroke="#6a6ad0" stroke-width="0.5"/>
<polyline points="1073.7,477.6 1082.9,466.9 1093.6,454.7 1096.6,445.5 1104.3,436.3 1108.9,427.2 1118.0,418.8 1133.3,410.4 1145.5,404.3 1163.8,396.6 1182.1,389.8 1186.7,379.8 1189.8,360.0" fill="none" stroke="#151a15" stroke-width="3.4" stroke-linejoin="round"/>
<polyline points="1073.7,477.6 1082.9,466.9 1093.6,454.7 1096.6,445.5 1104.3,436.3 1108.9,427.2 1118.0,418.8 1133.3,410.4 1145.5,404.3 1163.8,396.6 1182.1,389.8 1186.7,379.8 1189.8,360.0" fill="none" stroke="#b9d6b9" stroke-width="1.5" stroke-linejoin="round"/>
<polyline points="996.6,407.0 1004.3,411.6 1021.0,423.8 1025.6,433.0 1031.8,439.1 1045.5,452.8 1051.6,457.4 1068.5,473.0 1076.8,481.3 1083.0,495.8 1089.2,506.1 1093.3,516.5 1099.0,535.0 1114.8,560.4 1143.3,573.0" fill="none" stroke="#e02020" stroke-width="1.1" stroke-dasharray="1.4 1"/>
<polyline points="1428.0,71.9 1393.7,114.9 1373.7,177.1 1346.3,284.0 1334.6,320.0 1296.7,397.5" fill="none" stroke="#111" stroke-width="1.1" stroke-linejoin="round"/>
<path d="M1231.8,490.8 C1231.3,493.4 1228.7,501.3 1228.7,506.6 C1228.7,511.9 1232.3,517.6 1231.8,522.4 C1231.3,527.1 1229.2,531.9 1225.5,535.1 C1221.8,538.3 1213.7,538.2 1209.7,541.4 C1205.8,544.5 1206.5,550.8 1201.8,554.0 C1197.0,557.2 1185.7,557.8 1181.2,560.4 C1176.7,563.0 1177.0,564.6 1174.9,569.9 C1172.8,575.2 1170.1,587.3 1168.6,592.0 C1167.1,596.7 1165.7,595.7 1166.0,598.3 C1166.3,600.9 1172.0,601.0 1170.3,607.7 C1168.5,614.4 1161.2,631.0 1155.5,638.4 C1149.8,645.8 1139.9,648.8 1136.2,652.0 C1132.5,655.2 1134.9,654.1 1133.4,657.7 C1131.9,661.3 1129.8,667.6 1127.0,673.6 C1124.2,679.6 1118.8,688.3 1116.9,694.0 C1115.0,699.7 1117.6,704.6 1115.7,707.6 C1113.8,710.6 1108.9,712.0 1105.5,712.2 C1102.1,712.4 1101.2,712.4 1095.3,708.8 C1089.4,705.2 1080.9,696.7 1070.3,690.6 C1059.7,684.5 1041.2,675.9 1031.7,672.4 C1022.2,668.9 1020.5,669.8 1013.5,669.5 C1006.5,669.2 996.9,669.4 989.7,670.8 C982.5,672.2 976.9,675.2 970.4,678.1 C963.9,681.0 959.0,685.2 951.0,687.9 C943.0,690.5 932.0,691.4 922.7,694.0 C913.4,696.6 909.8,697.4 895.4,703.6 C881.0,709.9 852.2,723.1 836.3,731.5 C820.4,739.9 806.0,750.4 800.0,754.2" fill="none" stroke="#111" stroke-width="1.1"/>
<polyline points="1296.7,397.5 1231.8,490.8" fill="none" stroke="#111" stroke-width="1.1"/>
<polyline points="800.0,754.2 786.8,762.7 743.0,786.7 704.0,804.0 684.3,816.0 568.7,560.0 623.0,522.9 688.6,531.6" fill="none" stroke="#111" stroke-width="1.1" stroke-linejoin="round"/>
<path d="M688.6,531.6 C691.7,531.0 702.8,530.2 707.4,528.0 C712.0,525.8 713.3,524.5 716.0,518.5 C718.7,512.5 721.2,499.4 723.5,492.3 C725.8,485.2 727.1,480.2 730.0,475.8 C732.9,471.4 736.7,468.2 741.0,466.2 C745.3,464.2 748.7,464.4 756.0,464.0 C763.3,463.6 776.6,463.8 784.6,464.0 C792.6,464.2 798.9,468.9 804.2,465.3 C809.5,461.7 811.1,453.2 816.4,442.3 C821.7,431.4 831.5,408.0 836.0,399.8 C840.5,391.6 840.5,395.0 843.6,393.2 C846.7,391.4 851.8,392.0 854.5,388.9 C857.2,385.8 857.6,380.5 860.0,374.7 C862.4,368.9 864.5,359.8 868.7,354.0 C872.9,348.2 880.1,344.7 885.0,339.8 C889.9,334.9 894.7,328.3 898.0,324.5 C901.3,320.7 900.1,319.3 904.7,316.9 C909.3,314.5 919.6,314.1 925.4,310.3 C931.2,306.5 937.1,298.5 939.6,294.0 C942.1,289.5 940.4,284.9 940.6,283.1" fill="none" stroke="#111" stroke-width="1.1"/>
<polyline points="1172.2,129.3 1330.1,92.6 1368.3,84.6 1428.0,71.9" fill="none" stroke="#111" stroke-width="1.1" stroke-linejoin="round"/>
<polygon points="1231.8,490.8 1228.7,506.6 1231.8,522.4 1225.5,535.1 1209.7,541.4 1201.8,554 1198,552 1206,543 1220,533 1226,521 1223,506 1226,497" fill="url(#gdots)" stroke="#222" stroke-width="0.6"/>
<polyline points="1231.8,490.8 1228.7,506.6 1231.8,522.4 1225.5,535.1 1209.7,541.4 1201.8,554 1181.2,560.4 1174.9,569.9 1168.6,592 1166,598.3" fill="none" stroke="#111" stroke-width="1.9" stroke-linejoin="round"/>
<polyline points="1296.7,397.5 1231.8,490.8" fill="none" stroke="#111" stroke-width="1.4"/>
<path d="M940.6,283.1 C941.5,281.9 944.1,276.8 946.1,275.7 C948.1,274.6 951.1,275.7 952.6,276.6 C954.1,277.5 953.7,280.9 955.4,281.2 C957.1,281.5 960.0,279.6 962.8,278.4 C965.6,277.2 970.1,275.8 972.1,273.8 C974.1,271.8 974.0,269.5 974.8,266.4 C975.6,263.3 975.0,258.1 976.7,255.3 C978.4,252.5 982.4,251.1 985.0,249.7 C987.6,248.3 990.9,248.8 992.4,246.9 C993.9,245.1 993.5,241.2 994.3,238.6 C995.1,236.0 995.2,233.0 997.1,231.2 C999.0,229.3 1003.9,229.2 1005.4,227.5 C1006.9,225.8 1005.1,223.2 1006.3,221.0 C1007.5,218.8 1009.2,217.8 1012.8,214.5 C1016.4,211.2 1023.7,204.6 1027.7,201.5 C1031.7,198.4 1033.8,198.9 1036.9,196.0 C1040.0,193.1 1042.2,186.7 1046.2,183.9 C1050.2,181.1 1056.1,180.8 1061.0,179.3 C1065.9,177.8 1072.1,176.4 1075.8,174.7 C1079.5,173.0 1080.2,170.5 1083.3,169.1 C1086.4,167.7 1089.5,167.4 1094.4,166.3 C1099.3,165.2 1108.6,163.1 1112.9,162.6 C1117.2,162.1 1118.1,162.5 1120.3,163.6 C1122.5,164.7 1123.9,169.3 1125.9,169.1 C1127.9,168.9 1130.9,164.6 1132.4,162.6 C1133.9,160.6 1133.4,159.2 1135.1,157.1 C1136.8,154.9 1140.9,152.2 1142.6,149.7 C1144.3,147.2 1143.1,144.1 1145.3,142.2 C1147.5,140.3 1152.2,139.4 1155.5,138.5 C1158.8,137.6 1163.1,137.6 1164.8,136.7 C1166.5,135.8 1164.5,134.2 1165.7,133.0 C1166.9,131.8 1171.1,129.9 1172.2,129.3" fill="none" stroke="#151815" stroke-width="4.8" stroke-linejoin="round" stroke-linecap="round"/>
<path d="M940.6,283.1 C941.5,281.9 944.1,276.8 946.1,275.7 C948.1,274.6 951.1,275.7 952.6,276.6 C954.1,277.5 953.7,280.9 955.4,281.2 C957.1,281.5 960.0,279.6 962.8,278.4 C965.6,277.2 970.1,275.8 972.1,273.8 C974.1,271.8 974.0,269.5 974.8,266.4 C975.6,263.3 975.0,258.1 976.7,255.3 C978.4,252.5 982.4,251.1 985.0,249.7 C987.6,248.3 990.9,248.8 992.4,246.9 C993.9,245.1 993.5,241.2 994.3,238.6 C995.1,236.0 995.2,233.0 997.1,231.2 C999.0,229.3 1003.9,229.2 1005.4,227.5 C1006.9,225.8 1005.1,223.2 1006.3,221.0 C1007.5,218.8 1009.2,217.8 1012.8,214.5 C1016.4,211.2 1023.7,204.6 1027.7,201.5 C1031.7,198.4 1033.8,198.9 1036.9,196.0 C1040.0,193.1 1042.2,186.7 1046.2,183.9 C1050.2,181.1 1056.1,180.8 1061.0,179.3 C1065.9,177.8 1072.1,176.4 1075.8,174.7 C1079.5,173.0 1080.2,170.5 1083.3,169.1 C1086.4,167.7 1089.5,167.4 1094.4,166.3 C1099.3,165.2 1108.6,163.1 1112.9,162.6 C1117.2,162.1 1118.1,162.5 1120.3,163.6 C1122.5,164.7 1123.9,169.3 1125.9,169.1 C1127.9,168.9 1130.9,164.6 1132.4,162.6 C1133.9,160.6 1133.4,159.2 1135.1,157.1 C1136.8,154.9 1140.9,152.2 1142.6,149.7 C1144.3,147.2 1143.1,144.1 1145.3,142.2 C1147.5,140.3 1152.2,139.4 1155.5,138.5 C1158.8,137.6 1163.1,137.6 1164.8,136.7 C1166.5,135.8 1164.5,134.2 1165.7,133.0 C1166.9,131.8 1171.1,129.9 1172.2,129.3" fill="none" stroke="#c4e2c4" stroke-width="2.7" stroke-linejoin="round" stroke-linecap="round"/>
<g opacity="0.98">
<text x="1053" y="234.5" font-size="3.8" font-style="italic" font-weight="bold" text-anchor="middle" fill="#111" font-family="Liberation Sans">UCc</text>
<text x="951" y="328.5" font-size="3.8" font-style="italic" font-weight="bold" text-anchor="middle" fill="#111" font-family="Liberation Sans">UCc</text>
<text x="944" y="405.5" font-size="3.8" font-style="italic" font-weight="bold" text-anchor="middle" fill="#111" font-family="Liberation Sans">UCc</text>
<text x="1044" y="481.5" font-size="3.8" font-style="italic" font-weight="bold" text-anchor="middle" fill="#111" font-family="Liberation Sans">UCc</text>
<text x="1131" y="595.5" font-size="3.8" font-style="italic" font-weight="bold" text-anchor="middle" fill="#111" font-family="Liberation Sans">UCc</text>
<text x="773" y="625.5" font-size="3.8" font-style="italic" font-weight="bold" text-anchor="middle" fill="#111" font-family="Liberation Sans">UCc</text>
<text x="1150" y="185.5" font-size="3.8" font-style="italic" font-weight="bold" text-anchor="middle" fill="#111" font-family="Liberation Sans">UCc</text>
<text x="1183" y="242.5" font-size="3.8" font-style="italic" font-weight="bold" text-anchor="middle" fill="#111" font-family="Liberation Sans">UCc</text>
<text x="1242" y="159.5" font-size="3.8" font-style="italic" font-weight="bold" text-anchor="middle" fill="#111" font-family="Liberation Sans">UCc</text>
<text x="1291" y="169.5" font-size="3.8" font-style="italic" font-weight="bold" text-anchor="middle" fill="#111" font-family="Liberation Sans">UCc</text>
<text x="1324" y="233.5" font-size="3.8" font-style="italic" font-weight="bold" text-anchor="middle" fill="#111" font-family="Liberation Sans">UCc</text>
<text x="1335" y="197.5" font-size="3.8" font-style="italic" font-weight="bold" text-anchor="middle" fill="#111" font-family="Liberation Sans">UCc</text>
<text x="1348" y="166.5" font-size="3.8" font-style="italic" font-weight="bold" text-anchor="middle" fill="#111" font-family="Liberation Sans">UCc</text>
<text x="1366" y="168.5" font-size="3.8" font-style="italic" font-weight="bold" text-anchor="middle" fill="#111" font-family="Liberation Sans">UCc</text>
<text x="1399" y="93.5" font-size="3.8" font-style="italic" font-weight="bold" text-anchor="middle" fill="#111" font-family="Liberation Sans">UCc</text>
<text x="1313" y="108.5" font-size="3.8" font-style="italic" font-weight="bold" text-anchor="middle" fill="#111" font-family="Liberation Sans">UCc</text>
<text x="1350" y="101.5" font-size="3.8" font-style="italic" font-weight="bold" text-anchor="middle" fill="#111" font-family="Liberation Sans">UCc</text>
<text x="1228" y="295.5" font-size="3.8" font-style="italic" font-weight="bold" text-anchor="middle" fill="#111" font-family="Liberation Sans">UCc</text>
<text x="1283" y="367.5" font-size="3.8" font-style="italic" font-weight="bold" text-anchor="middle" fill="#111" font-family="Liberation Sans">UCc</text>
<text x="1290" y="297.5" font-size="3.8" font-style="italic" font-weight="bold" text-anchor="middle" fill="#111" font-family="Liberation Sans">UCc</text>
<text x="1230" y="343.5" font-size="3.8" font-style="italic" font-weight="bold" text-anchor="middle" fill="#111" font-family="Liberation Sans">UCc</text>
<text x="1257" y="339.5" font-size="3.8" font-style="italic" font-weight="bold" text-anchor="middle" fill="#111" font-family="Liberation Sans">UCc</text>
<text x="1234" y="468.5" font-size="3.8" font-style="italic" font-weight="bold" text-anchor="middle" fill="#111" font-family="Liberation Sans">UCc</text>
<text x="1256" y="438.5" font-size="3.8" font-style="italic" font-weight="bold" text-anchor="middle" fill="#111" font-family="Liberation Sans">UCc</text>
<text x="1170" y="553.5" font-size="3.8" font-style="italic" font-weight="bold" text-anchor="middle" fill="#111" font-family="Liberation Sans">UCc</text>
<text x="1137" y="462.5" font-size="3.8" font-style="italic" font-weight="bold" text-anchor="middle" fill="#111" font-family="Liberation Sans">UCc</text>
<text x="1182" y="499.5" font-size="3.8" font-style="italic" font-weight="bold" text-anchor="middle" fill="#111" font-family="Liberation Sans">UCc</text>
<text x="1105" y="358.5" font-size="3.8" font-style="italic" font-weight="bold" text-anchor="middle" fill="#111" font-family="Liberation Sans">UCc</text>
<text x="1127" y="343.5" font-size="3.8" font-style="italic" font-weight="bold" text-anchor="middle" fill="#111" font-family="Liberation Sans">UCc</text>
<text x="1168" y="343.5" font-size="3.8" font-style="italic" font-weight="bold" text-anchor="middle" fill="#111" font-family="Liberation Sans">UCc</text>
<text x="1105" y="281.5" font-size="3.8" font-style="italic" font-weight="bold" text-anchor="middle" fill="#111" font-family="Liberation Sans">UCc</text>
<text x="1123" y="332.5" font-size="3.8" font-style="italic" font-weight="bold" text-anchor="middle" fill="#111" font-family="Liberation Sans">UCc</text>
<text x="1045" y="381.5" font-size="3.8" font-style="italic" font-weight="bold" text-anchor="middle" fill="#111" font-family="Liberation Sans">UCc</text>
<text x="1036" y="368.5" font-size="3.8" font-style="italic" font-weight="bold" text-anchor="middle" fill="#111" font-family="Liberation Sans">UCc</text>
<text x="1000" y="401.5" font-size="3.8" font-style="italic" font-weight="bold" text-anchor="middle" fill="#111" font-family="Liberation Sans">UCc</text>
<text x="1076" y="397.5" font-size="3.8" font-style="italic" font-weight="bold" text-anchor="middle" fill="#111" font-family="Liberation Sans">UCc</text>
<text x="1082" y="437.5" font-size="3.8" font-style="italic" font-weight="bold" text-anchor="middle" fill="#111" font-family="Liberation Sans">UCc</text>
<text x="1106" y="420.5" font-size="3.8" font-style="italic" font-weight="bold" text-anchor="middle" fill="#111" font-family="Liberation Sans">UCc</text>
<text x="1040" y="449.5" font-size="3.8" font-style="italic" font-weight="bold" text-anchor="middle" fill="#111" font-family="Liberation Sans">UCc</text>
<text x="1064" y="461.5" font-size="3.8" font-style="italic" font-weight="bold" text-anchor="middle" fill="#111" font-family="Liberation Sans">UCc</text>
<text x="1098" y="501.5" font-size="3.8" font-style="italic" font-weight="bold" text-anchor="middle" fill="#111" font-family="Liberation Sans">UCc</text>
<text x="1170" y="517.5" font-size="3.8" font-style="italic" font-weight="bold" text-anchor="middle" fill="#111" font-family="Liberation Sans">UCc</text>
<text x="1163" y="405.5" font-size="3.8" font-style="italic" font-weight="bold" text-anchor="middle" fill="#111" font-family="Liberation Sans">UCc</text>
<text x="1208" y="246.5" font-size="3.8" font-style="italic" font-weight="bold" text-anchor="middle" fill="#111" font-family="Liberation Sans">UCc</text>
<text x="1217" y="269.5" font-size="3.8" font-style="italic" font-weight="bold" text-anchor="middle" fill="#111" font-family="Liberation Sans">UCc</text>
<text x="1300" y="384.5" font-size="3.8" font-style="italic" font-weight="bold" text-anchor="middle" fill="#111" font-family="Liberation Sans">UCc</text>
<text x="1194" y="387.5" font-size="3.8" font-style="italic" font-weight="bold" text-anchor="middle" fill="#111" font-family="Liberation Sans">UCc</text>
<text x="1217" y="413.5" font-size="3.8" font-style="italic" font-weight="bold" text-anchor="middle" fill="#111" font-family="Liberation Sans">UCc</text>
<text x="1107" y="265.5" font-size="3.8" font-style="italic" font-weight="bold" text-anchor="middle" fill="#111" font-family="Liberation Sans">UCc</text>
<text x="1085" y="303.5" font-size="3.8" font-style="italic" font-weight="bold" text-anchor="middle" fill="#111" font-family="Liberation Sans">UCc</text>
<text x="1038" y="346.5" font-size="3.8" font-style="italic" font-weight="bold" text-anchor="middle" fill="#111" font-family="Liberation Sans">UCc</text>
<text x="1017" y="365.5" font-size="3.8" font-style="italic" font-weight="bold" text-anchor="middle" fill="#111" font-family="Liberation Sans">UCc</text>
<text x="1053" y="408.5" font-size="3.8" font-style="italic" font-weight="bold" text-anchor="middle" fill="#111" font-family="Liberation Sans">UCc</text>
<text x="1100" y="393.5" font-size="3.8" font-style="italic" font-weight="bold" text-anchor="middle" fill="#111" font-family="Liberation Sans">UCc</text>
<text x="1170" y="301.5" font-size="3.8" font-style="italic" font-weight="bold" text-anchor="middle" fill="#111" font-family="Liberation Sans">UCc</text>
<text x="1150" y="331.5" font-size="3.8" font-style="italic" font-weight="bold" text-anchor="middle" fill="#111" font-family="Liberation Sans">UCc</text>
<text x="1141" y="532.5" font-size="3.8" font-style="italic" font-weight="bold" text-anchor="middle" fill="#111" font-family="Liberation Sans">UCc</text>
</g>
<circle cx="1187.8" cy="168.1" r="2.1" fill="#fff" stroke="#111" stroke-width="1"/>
<text x="1190.3" y="166.6" font-size="3.2" font-weight="bold" fill="#222" font-family="Liberation Sans">EBC</text>
<circle cx="1193.4" cy="162.6" r="2.1" fill="#fff" stroke="#111" stroke-width="1"/>
<text x="1195.9" y="161.1" font-size="3.2" font-weight="bold" fill="#222" font-family="Liberation Sans">EBC</text>
<circle cx="1213.3" cy="181.6" r="2.1" fill="#fff" stroke="#111" stroke-width="1"/>
<text x="1215.8" y="180.1" font-size="3.2" font-weight="bold" fill="#222" font-family="Liberation Sans">EBC</text>
<circle cx="1272.9" cy="165.7" r="2.1" fill="#fff" stroke="#111" stroke-width="1"/>
<text x="1275.4" y="164.2" font-size="3.2" font-weight="bold" fill="#222" font-family="Liberation Sans">EBC</text>
<circle cx="1292" cy="167.3" r="2.1" fill="#fff" stroke="#111" stroke-width="1"/>
<text x="1294.5" y="165.8" font-size="3.2" font-weight="bold" fill="#222" font-family="Liberation Sans">EBC</text>
<circle cx="1268.9" cy="187.2" r="2.1" fill="#fff" stroke="#111" stroke-width="1"/>
<text x="1271.4" y="185.7" font-size="3.2" font-weight="bold" fill="#222" font-family="Liberation Sans">EBC</text>
<circle cx="1215.5" cy="188.5" r="2.1" fill="#fff" stroke="#111" stroke-width="1"/>
<text x="1218.0" y="187.0" font-size="3.2" font-weight="bold" fill="#222" font-family="Liberation Sans">EBC</text>
<circle cx="1256" cy="216" r="2.1" fill="#fff" stroke="#111" stroke-width="1"/>
<text x="1258.5" y="214.5" font-size="3.2" font-weight="bold" fill="#222" font-family="Liberation Sans">EBC</text>
<circle cx="1263" cy="221" r="2.1" fill="#fff" stroke="#111" stroke-width="1"/>
<text x="1265.5" y="219.5" font-size="3.2" font-weight="bold" fill="#222" font-family="Liberation Sans">EBC</text>
</svg><!--/MAP-->
</body></html>
